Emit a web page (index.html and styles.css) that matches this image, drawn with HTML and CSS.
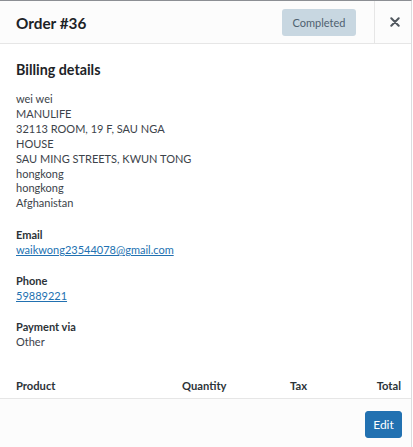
FILE: index.html
```html
<!DOCTYPE html>
<html>
<head>
<meta charset="utf-8">
<link rel="stylesheet" href="styles.css">
</head>
<body>
<div class="modal">
  <header class="modal-header">
    <h1 class="title">Order #36</h1>
    <span class="badge">Completed</span>
    <button class="close" aria-label="Close">
      <svg width="10" height="10" viewBox="0 0 10 10"><path d="M1.3 1.3 L8.7 8.7 M8.7 1.3 L1.3 8.7" stroke="#50575e" stroke-width="2" stroke-linecap="round"/></svg>
    </button>
  </header>
  <section class="modal-body">
    <h2 class="section-title">Billing details</h2>
    <p class="address">wei wei<br>MANULIFE<br>32113 ROOM, 19 F, SAU NGA<br>HOUSE<br>SAU MING STREETS, KWUN TONG<br>hongkong<br>hongkong<br>Afghanistan</p>
    <div class="field">
      <strong>Email</strong>
      <a href="#">waikwong23544078@gmail.com</a>
    </div>
    <div class="field">
      <strong>Phone</strong>
      <a href="#">59889221</a>
    </div>
    <div class="field">
      <strong>Payment via</strong>
      <span>Other</span>
    </div>
    <table class="items">
      <thead>
        <tr><th class="c-product">Product</th><th class="c-qty">Quantity</th><th class="c-tax">Tax</th><th class="c-total">Total</th></tr>
      </thead>
    </table>
  </section>
  <footer class="modal-footer">
    <button class="edit">Edit</button>
  </footer>
</div>
</body>
</html>
```
FILE: styles.css
```css
html, body { margin: 0; padding: 0; }
body {
  background: #fff;
  font-family: "Lato", "Noto Sans", sans-serif;
  font-size: 11px;
  color: #3c434a;
  width: 413px;
  height: 447px;
  overflow: hidden;
}
.modal {
  width: 411px;
  height: 446px;
  border-top: 1px solid #8c8f94;
  border-right: 1px solid #dcdcde;
  background: #fff;
  display: flex;
  flex-direction: column;
  box-sizing: content-box;
}
.modal-header {
  height: 42px;
  flex: none;
  display: flex;
  align-items: center;
  background: #fcfcfc;
  border-bottom: 1px solid #e6e6e6;
}
.title {
  margin: 1px 0 0 16px;
  font-size: 15.3px;
  font-weight: 700;
  color: #1d2327;
  flex: 1;
}
.badge {
  background: #c8d7e1;
  color: #4f6170;
  border-radius: 3px;
  height: 27px;
  width: 74px;
  display: flex;
  align-items: center;
  justify-content: center;
  font-size: 11px;
  margin-right: 18px;
  margin-top: 1px;
}
.close {
  width: 37px;
  height: 42px;
  border: 0;
  border-left: 1px solid #e6e6e6;
  background: transparent;
  padding: 0 0 0 4px;
  display: flex;
  align-items: center;
  justify-content: center;
}
.modal-body {
  flex: 1;
  overflow: hidden;
  padding: 16px 10px 0 16px;
}
.section-title {
  margin: 0 0 12px;
  font-size: 14.3px;
  font-weight: 700;
  color: #1d2327;
  line-height: 20px;
}
.address {
  margin: 0 0 17px;
  line-height: 14.9px;
}
.field {
  display: flex;
  flex-direction: column;
  line-height: 14.5px;
  margin-bottom: 17px;
}
.field strong { color: #2c3338; font-weight: 700; }
.field a { color: #2271b1; text-decoration: underline; }
.items {
  width: 100%;
  border-collapse: collapse;
  margin-top: 29px;
}
.items th {
  font-weight: 700;
  font-size: 11.2px;
  color: #2c3338;
  padding: 0;
  line-height: 15px;
  text-align: left;
}
.c-product { width: 166px; }
.c-qty { width: 108px; }
.items th.c-total { text-align: right; }
.modal-footer {
  flex: none;
  height: 48px;
  background: #fcfcfc;
  border-top: 1px solid #e6e6e6;
  display: flex;
  justify-content: flex-end;
  align-items: center;
  padding-right: 9px;
}
.edit {
  background: #2271b1;
  color: #fff;
  border: 1px solid #2271b1;
  border-radius: 3px;
  height: 27px;
  width: 37px;
  padding: 0;
  font-family: inherit;
  font-size: 12px;
  margin-top: 3px;
}
```
